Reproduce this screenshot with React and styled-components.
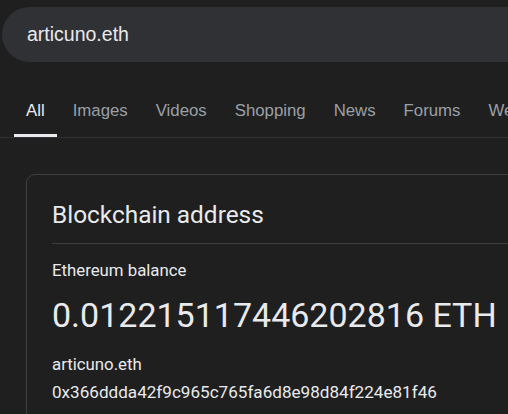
import React from 'react';
import styled, { createGlobalStyle } from 'styled-components';

const GlobalStyle = createGlobalStyle`
  html, body {
    margin: 0;
    padding: 0;
    background: #1f1f1f;
    overflow: hidden;
  }
`;

const Page = styled.div`
  width: 508px;
  height: 414px;
  overflow: hidden;
  background: #1f1f1f;
  color: #e8eaed;
`;

const SearchBar = styled.div`
  display: flex;
  align-items: center;
  margin: 7px 0 0 2px;
  width: 560px;
  height: 55px;
  padding-left: 25px;
  box-sizing: border-box;
  border-radius: 28px;
  background: #303134;
  font-family: "Liberation Sans", Arial, sans-serif;
  font-size: 19.5px;
  color: #e8eaed;
`;

const TabBar = styled.nav`
  display: flex;
  gap: 4px;
  margin-top: 24px;
  padding-left: 14px;
  border-bottom: 1px solid #303134;
  white-space: nowrap;
`;

const Tab = styled.div`
  padding: 15px 12px 13px;
  line-height: 20px;
  font-family: "Liberation Sans", Arial, sans-serif;
  font-size: 16.8px;
  color: ${props => (props.active ? '#e8eaed' : '#9aa0a6')};
  border-bottom: 3px solid ${props => (props.active ? '#e8eaed' : 'transparent')};
`;

const Card = styled.section`
  margin: 36px 0 0 26px;
  width: 560px;
  padding: 24px 0 0 25px;
  box-sizing: border-box;
  border: 1px solid #3c4043;
  border-radius: 9px;
  font-family: Roboto, "Noto Sans", sans-serif;
  min-height: 300px;
`;

const Title = styled.h2`
  margin: 0;
  font-size: 24.4px;
  line-height: 32px;
  font-weight: 400;
  color: #e8eaed;
`;

const Divider = styled.div`
  height: 1px;
  margin: 12px 0 16px;
  background: #3c4043;
`;

const Line = styled.div`
  font-size: ${props => props.size || '16.8px'};
  line-height: 20px;
  color: #e8eaed;
  margin-top: ${props => props.gap || '0'};
`;

const Balance = styled.div`
  font-size: 34px;
  line-height: 40px;
  margin-top: 15px;
  color: #e8eaed;
  white-space: nowrap;
`;

export default function App() {
  const tabs = ['All', 'Images', 'Videos', 'Shopping', 'News', 'Forums', 'Web'];
  return (
    <Page>
      <GlobalStyle />
      <SearchBar>articuno.eth</SearchBar>
      <TabBar>
        {tabs.map((t, i) => (
          <Tab key={t} active={i === 0}>{t}</Tab>
        ))}
      </TabBar>
      <Card>
        <Title>Blockchain address</Title>
        <Divider />
        <Line>Ethereum balance</Line>
        <Balance>0.012215117446202816 ETH</Balance>
        <Line gap='19px'>articuno.eth</Line>
        <Line gap='8px' size='17.1px'>0x366ddda42f9c965c765fa6d8e98d84f224e81f46</Line>
      </Card>
    </Page>
  );
}
